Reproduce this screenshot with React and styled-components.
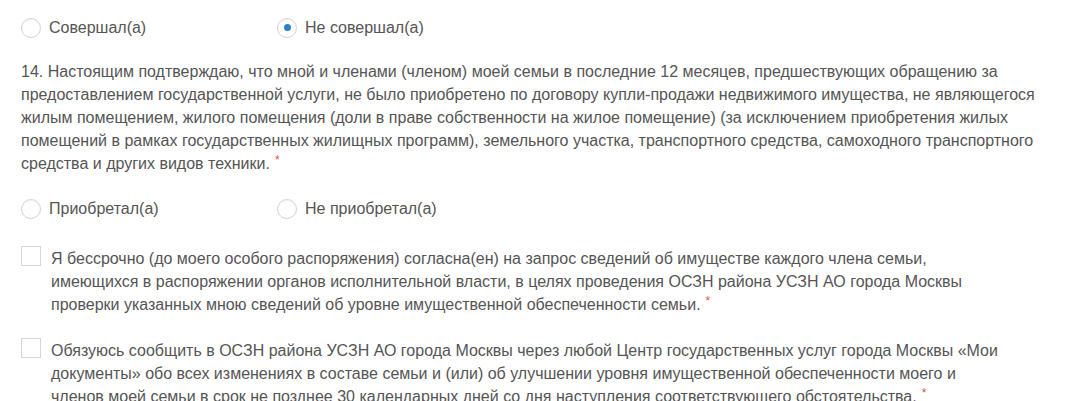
import React from "react";
import styled, { createGlobalStyle } from "styled-components";

const Global = createGlobalStyle`
  html, body { margin: 0; padding: 0; background: #fff; }
  body { font-family: "Liberation Sans", Arial, sans-serif; color: #555; }
`;

const Page = styled.div`
  width: 1030px;
  padding: 0 0 0 21px;
  font-size: 16px;
  line-height: 23px;
`;

const RadioGroup = styled.div`
  display: flex;
  align-items: center;
  padding-top: ${(p) => p.$top}px;
`;

const RadioLabel = styled.label`
  display: flex;
  align-items: center;
  gap: 8px;
  width: 256px;
  cursor: pointer;
`;

const RadioCircle = styled.span`
  box-sizing: border-box;
  width: 20px;
  height: 20px;
  border-radius: 50%;
  border: 1px solid #d4d4d4;
  box-shadow: inset 0 1px 2px rgba(0,0,0,0.06);
  background: #fff;
  display: flex;
  align-items: center;
  justify-content: center;
  flex: none;
  &::after {
    content: "";
    width: 7px;
    height: 7px;
    border-radius: 50%;
    background: ${(p) => (p.$checked ? "#2f7fcf" : "transparent")};
  }
`;

const Paragraph = styled.p`
  margin: 0;
  padding-top: ${(p) => p.$top}px;
`;

const Req = styled.span`
  color: #d9534f;
  font-size: 12px;
  vertical-align: top;
  position: relative;
  top: -3px;
  margin-left: 5px;
`;

const CheckRow = styled.div`
  display: flex;
  align-items: flex-start;
  gap: 10px;
  padding-top: ${(p) => p.$top}px;
`;

const CheckBox = styled.span`
  box-sizing: border-box;
  width: 20px;
  height: 20px;
  border: 1px solid #d6d6d6;
  background: #fff;
  flex: none;
  margin-top: -1px;
`;

const CheckText = styled.div`
  flex: 1;
  padding-right: ${(p) => p.$right}px;
`;

function Radio({ label, checked }) {
  return (
    <RadioLabel>
      <RadioCircle $checked={checked} />
      <span>{label}</span>
    </RadioLabel>
  );
}

export default function App() {
  return (
    <>
      <Global />
      <Page>
        <RadioGroup $top={16}>
          <Radio label="Совершал(а)" />
          <Radio label="Не совершал(а)" checked />
        </RadioGroup>
        <Paragraph $top={21}>
          14. Настоящим подтверждаю, что мной и членами (членом) моей семьи в последние 12 месяцев, предшествующих обращению за предоставлением государственной услуги, не было приобретено по договору купли-продажи недвижимого имущества, не являющегося жилым помещением, жилого помещения (доли в праве собственности на жилое помещение) (за исключением приобретения жилых помещений в рамках государственных жилищных программ), земельного участка, транспортного средства, самоходного транспортного средства и других видов техники.
          <Req>*</Req>
        </Paragraph>
        <RadioGroup $top={22}>
          <Radio label="Приобретал(а)" />
          <Radio label="Не приобретал(а)" />
        </RadioGroup>
        <CheckRow $top={27}>
          <CheckBox />
          <CheckText $right={56}>
            Я бессрочно (до моего особого распоряжения) согласна(ен) на запрос сведений об имуществе каждого члена семьи, имеющихся в распоряжении органов исполнительной власти, в целях проведения ОСЗН района УСЗН АО города Москвы проверки указанных мною сведений об уровне имущественной обеспеченности семьи.
            <Req>*</Req>
          </CheckText>
        </CheckRow>
        <CheckRow $top={23}>
          <CheckBox />
          <CheckText $right={44}>
            Обязуюсь сообщить в ОСЗН района УСЗН АО города Москвы через любой Центр государственных услуг города Москвы «Мои документы» обо всех изменениях в составе семьи и (или) об улучшении уровня имущественной обеспеченности моего и
            <br />
            членов моей семьи в срок не позднее 30 календарных дней со дня наступления соответствующего обстоятельства.
            <Req>*</Req>
          </CheckText>
        </CheckRow>
      </Page>
    </>
  );
}
